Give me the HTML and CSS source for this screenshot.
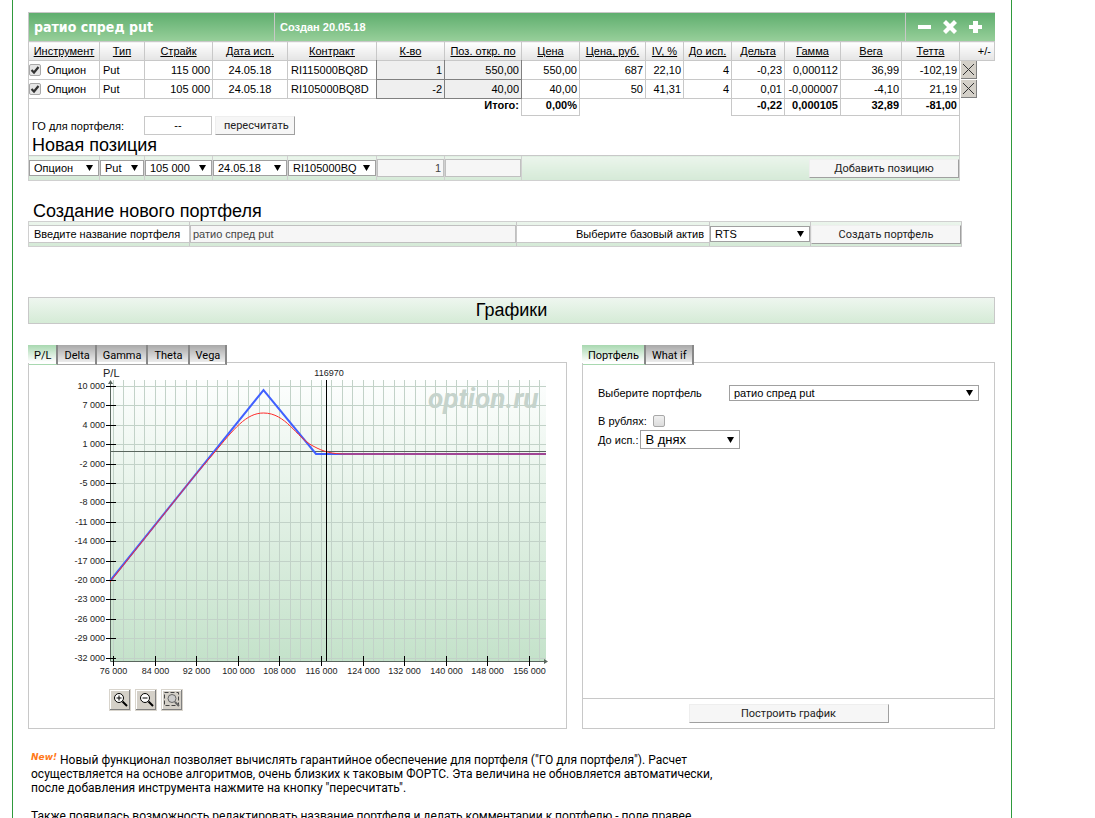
FILE: index.html
```html
<!DOCTYPE html>
<html lang="ru">
<head>
    <meta charset="UTF-8">
    <title>Портфель опционов</title>
    <link rel="stylesheet" href="styles.css">
</head>
<body>

<div class="page">
    <div class="title-bar">
        <h1>ратио спред put</h1>
        <div class="created">Создан 20.05.18</div>
        <div class="tools">
            <button type="button" aria-label="Свернуть"><svg width="13" height="14"><path d="M0 5h13v4H0z"/></svg></button>
            <button type="button" aria-label="Закрыть"><svg width="14" height="14"><path d="M3 0L7 4L11 0L14 3L10 7L14 11L11 14L7 10L3 14L0 11L4 7L0 3z"/></svg></button>
            <button type="button" aria-label="Добавить"><svg width="13" height="14"><path d="M4 1h5v4h4v4H9v4H4V9H0V5h4z"/></svg></button>
        </div>
    </div>

    <table class="positions">
        <colgroup>
            <col class="c-tool"><col class="c-type"><col class="c-strike"><col class="c-date"><col class="c-contract">
            <col class="c-qty"><col class="c-open"><col class="c-price"><col class="c-rub"><col class="c-iv"><col class="c-days">
            <col class="c-delta"><col class="c-gamma"><col class="c-vega"><col class="c-theta"><col class="c-del">
        </colgroup>
        <thead>
            <tr>
                <th><a href="#">Инструмент</a></th>
                <th><a href="#">Тип</a></th>
                <th><a href="#">Страйк</a></th>
                <th><a href="#">Дата исп.</a></th>
                <th><a href="#">Контракт</a></th>
                <th><a href="#">К-во</a></th>
                <th><a href="#">Поз. откр. по</a></th>
                <th><a href="#">Цена</a></th>
                <th><a href="#">Цена, руб.</a></th>
                <th><a href="#">IV, %</a></th>
                <th><a href="#">До исп.</a></th>
                <th><a href="#">Дельта</a></th>
                <th><a href="#">Гамма</a></th>
                <th><a href="#">Вега</a></th>
                <th><a href="#">Тетта</a></th>
                <th class="right">+/-</th>
            </tr>
        </thead>
        <tbody>
            <tr>
                <td class="tool"><label><input type="checkbox" checked>Опцион</label></td>
                <td class="left">Put</td>
                <td>115 000</td>
                <td class="mid">24.05.18</td>
                <td class="left">RI115000BQ8D</td>
                <td class="edit"><input type="text" value="1" aria-label="К-во"></td>
                <td class="edit"><input type="text" value="550,00" aria-label="Поз. откр. по"></td>
                <td>550,00</td>
                <td>687</td>
                <td>22,10</td>
                <td>4</td>
                <td>-0,23</td>
                <td>0,000112</td>
                <td>36,99</td>
                <td>-102,19</td>
                <td class="del"><button type="button" aria-label="Удалить"><svg width="11" height="11"><path d="M0 0L11 11M11 0L0 11"/></svg></button></td>
            </tr>
            <tr>
                <td class="tool"><label><input type="checkbox" checked>Опцион</label></td>
                <td class="left">Put</td>
                <td>105 000</td>
                <td class="mid">24.05.18</td>
                <td class="left">RI105000BQ8D</td>
                <td class="edit"><input type="text" value="-2" aria-label="К-во"></td>
                <td class="edit"><input type="text" value="40,00" aria-label="Поз. откр. по"></td>
                <td>40,00</td>
                <td>50</td>
                <td>41,31</td>
                <td>4</td>
                <td>0,01</td>
                <td>-0,000007</td>
                <td>-4,10</td>
                <td>21,19</td>
                <td class="del"><button type="button" aria-label="Удалить"><svg width="11" height="11"><path d="M0 0L11 11M11 0L0 11"/></svg></button></td>
            </tr>
            <tr class="total">
                <td colspan="7" class="total-name">Итого:</td>
                <td>0,00%</td>
                <td colspan="3" class="blank"></td>
                <td>-0,22</td>
                <td>0,000105</td>
                <td>32,89</td>
                <td>-81,00</td>
                <td class="blank"></td>
            </tr>
            <tr>
                <td colspan="15" class="margin">
                    <div class="margin-row">
                        <span class="margin-name">ГО для портфеля:</span>
                        <span class="margin-value">--</span>
                        <button type="button" class="btn recount">пересчитать</button>
                    </div>
                    <h2>Новая позиция</h2>
                </td>
                <td class="blank"></td>
            </tr>
            <tr class="new">
                <td><select aria-label="Инструмент"><option>Опцион</option></select></td>
                <td><select aria-label="Тип"><option>Put</option></select></td>
                <td><select aria-label="Страйк"><option>105 000</option></select></td>
                <td><select aria-label="Дата исп."><option>24.05.18</option></select></td>
                <td><select aria-label="Контракт"><option>RI105000BQ</option></select></td>
                <td><input type="text" class="field num" value="1" aria-label="К-во"></td>
                <td><input type="text" class="field num" value="" aria-label="Поз. откр. по"></td>
                <td colspan="8"><button type="button" class="btn wide">Добавить позицию</button></td>
                <td class="blank"></td>
            </tr>
        </tbody>
    </table>

    <h2 class="create-title">Создание нового портфеля</h2>
    <form class="create">
        <div><label class="caption" for="name">Введите название портфеля</label></div>
        <div><input type="text" class="field" id="name" value="ратио спред put"></div>
        <div><label class="caption end" for="asset">Выберите базовый актив</label></div>
        <div><select id="asset"><option>RTS</option></select></div>
        <div><button type="button" class="btn wide">Создать портфель</button></div>
    </form>

    <h2 class="charts-title">Графики</h2>

    <div class="charts">
        <section>
            <div class="tabs">
                <button type="button" class="tab active">P/L</button>
                <button type="button" class="tab">Delta</button>
                <button type="button" class="tab">Gamma</button>
                <button type="button" class="tab">Theta</button>
                <button type="button" class="tab">Vega</button>
            </div>
            <div class="panel">
                <svg class="chart" id="chart" width="530" height="320">
                    <defs>
                        <linearGradient id="bg" x1="0" y1="0" x2="0" y2="1">
                            <stop offset="0" stop-color="#fdfefe"/>
                            <stop offset="1" stop-color="#c4e2ca"/>
                        </linearGradient>
                    </defs>
                    <rect x="81" y="16" width="436" height="281" fill="url(#bg)"/>
                    <path id="grid" class="grid"/>
                    <text x="399" y="44" class="mark">option.ru</text>
                    <path class="axis" d="M81.500 18V297.500H518M82 87.500H517"/>
                    <path class="tip" d="M79 20L81.500 16L84 20zM515 295L519 297.500L515 300z"/>
                    <path class="blue" d="M81 217L234.500 26L287 90H517"/>
                    <path class="red" d="M81 218L163 115L185 89C205 65 217 49 234.500 49C257 49 267 73 284 82C295 88 303 90 317 90H517"/>
                    <path id="ticks" class="ticks"/>
                    <path class="ticks" d="M297.500 16V297"/>
                    <text x="74" y="13" class="name">P/L</text>
                    <text x="300" y="12" class="center">116970</text>
                </svg>
                <div class="zoom">
                    <button type="button" aria-label="Увеличить"><svg width="18" height="18"><circle cx="8" cy="7" r="4.500" fill="#fff"/><path d="M5.500 7H10.500M8 4.500V9.500"/><path class="grip" d="M11.500 10.500L16 15"/></svg></button>
                    <button type="button" aria-label="Уменьшить"><svg width="18" height="18"><circle cx="8" cy="7" r="4.500" fill="#fff"/><path d="M5.500 7H10.500"/><path class="grip" d="M11.500 10.500L16 15"/></svg></button>
                    <button type="button" aria-label="Выделить область"><svg width="18" height="18"><rect x="1.500" y="1.500" width="14" height="13" fill="none" stroke="#444" stroke-dasharray="4 2"/><circle cx="9" cy="7.500" r="4" fill="#ccc" class="lens"/><path class="grip grey" d="M12 11L16 15"/></svg></button>
                </div>
            </div>
        </section>

        <section>
            <div class="tabs">
                <button type="button" class="tab active">Портфель</button>
                <button type="button" class="tab">What if</button>
            </div>
            <div class="panel settings">
                <div class="options">
                    <div class="row first">
                        <label for="portfolio">Выберите портфель</label>
                        <select id="portfolio"><option>ратио спред put</option></select>
                    </div>
                    <div class="row">
                        <label for="rub">В рублях:</label>
                        <input type="checkbox" id="rub">
                    </div>
                    <div class="row">
                        <label for="days">До исп.:</label>
                        <select id="days" class="big"><option>В днях</option></select>
                    </div>
                </div>
                <div class="build"><button type="button" class="btn">Построить график</button></div>
            </div>
        </section>
    </div>

    <div class="news">
        <p><sup>New!</sup> Новый функционал позволяет вычислять гарантийное обеспечение для портфеля ("ГО для портфеля"). Расчет осуществляется на основе алгоритмов, очень близких к таковым ФОРТС. Эта величина не обновляется автоматически, после добавления инструмента нажмите на кнопку "пересчитать".</p>
        <p>Также появилась возможность редактировать название портфеля и делать комментарии к портфелю - поле правее</p>
    </div>
</div>

<script>
    var chart = document.getElementById('chart')
    var grid = ''
    var ticks = ''

    function label(x, y, value, cls) {
        var text = document.createElementNS('http://www.w3.org/2000/svg', 'text')
        text.setAttribute('x', x)
        text.setAttribute('y', y)
        text.setAttribute('class', cls)
        text.textContent = String(value).replace(/(\d{3})$/, ' $1')
        chart.appendChild(text)
    }

    // horizontal lines, every 3000
    for (var i = 0; i < 15; i++) {
        var y = Math.round(22 + i * 19.4) + 0.5
        grid += 'M82 ' + y + 'H517'
        ticks += 'M77 ' + y + 'H87'
        label(76, y + 2, 10000 - i * 3000, 'end')
    }

    // vertical lines, every 2000, each fourth one has a label
    for (var j = 0; j < 42; j++) {
        var x = Math.round(84 + j * 10.4) + 0.5
        grid += 'M' + x + ' 16V297'
        if (j % 4 == 0) {
            ticks += 'M' + x + ' 292V302'
            label(x, 310, 76000 + j * 2000, 'center')
        }
    }
    document.getElementById('grid').setAttribute('d', grid)
    document.getElementById('ticks').setAttribute('d', ticks)
</script>
</body>
</html>
```
FILE: styles.css
```css
*{
    box-sizing: border-box;
}
body{
    margin: 0;
    background: white;
    color: black;
    font-family: "Liberation Sans", Arial, sans-serif;
    font-size: 11px;
}
button, input, select{
    margin: 0;
    font: inherit;
    color: inherit;
}
h1, h2, p{
    margin: 0;
}
h2{
    font-size: 18px;
    line-height: 20px;
    font-weight: normal;
}
.page{
    min-height: 100vh;
    margin: 0 83px 0 12px;
    padding: 12px 16px 0 15px;
    border-left: 1px solid #2f9a3c;
    border-right: 1px solid #2f9a3c;
}

/* title */
.title-bar{
    display: flex;
    align-items: stretch;
    height: 29px;
    border: 1px solid #c8c8c8;
    border-width: 1px 0 0 1px;
    background: linear-gradient(#5fae6e, #97cf9a);
    color: white;
    font-weight: bold;
    line-height: 28px;
}
h1{
    width: 246px;
    padding-left: 5px;
    border-right: 1px solid #c8c8c8;
    font-family: "DejaVu Sans Condensed", Tahoma, sans-serif;
    font-size: 14px;
}
.created{
    flex: 1;
    padding-left: 5px;
}
.tools{
    display: flex;
    align-items: center;
    gap: 12px;
    width: 90px;
    padding-left: 12px;
    border-left: 1px solid #c8c8c8;
}
.tools button{
    padding: 0;
    border: 0;
    background: none;
}
.tools svg{
    display: block;
    fill: white;
}

/* positions */
.positions{
    width: 100%;
    table-layout: fixed;
    border-collapse: collapse;
}
.c-tool{ width: 71px; }
.c-type{ width: 45px; }
.c-strike{ width: 68px; }
.c-date{ width: 75px; }
.c-contract{ width: 89px; }
.c-qty{ width: 68px; }
.c-open{ width: 77px; }
.c-price{ width: 58px; }
.c-rub{ width: 66px; }
.c-iv{ width: 38px; }
.c-days{ width: 48px; }
.c-delta{ width: 53px; }
.c-gamma{ width: 56px; }
.c-vega{ width: 61px; }
.c-theta{ width: 58px; }
.c-del{ width: 35px; }
th, td{
    height: 19px;
    padding: 0 2px;
    border: 1px solid #c8c8c8;
    white-space: nowrap;
    line-height: 14px;
}
th{
    padding: 0;
    background: linear-gradient(white, #e4e4e4);
    font-weight: normal;
    text-align: center;
}
th.right{
    padding-right: 3px;
    text-align: right;
}
th a{
    color: black;
}
td{
    text-align: right;
}
td.left{
    padding-left: 3px;
    text-align: left;
}
td.mid{
    text-align: center;
}
td.tool{
    padding: 0;
    text-align: left;
}
.tool label{
    display: flex;
    align-items: center;
    gap: 6px;
}
input[type=checkbox]{
    appearance: none;
    width: 12px;
    height: 12px;
    border: 1px solid #a8a8a8;
    border-radius: 2px;
    background: linear-gradient(#f0f0f0, #dcdcdc);
}
input[type=checkbox]:checked{
    background: url("data:image/svg+xml,%3Csvg xmlns='http://www.w3.org/2000/svg' width='10' height='10'%3E%3Cpath d='M1.500 5L4 7.500L8.500 2' fill='none' stroke='%23333' stroke-width='2.200'/%3E%3C/svg%3E") center no-repeat, #e6e6e6;
}
/* double wins over the solid borders of the neighbour cells */
td.edit{
    padding: 0;
    border: 1px double #808080;
    border-top-style: solid;
    background: #efefef;
}
.edit input{
    display: block;
    width: 100%;
    height: 18px;
    padding: 0 2px;
    border: 0;
    background: none;
    text-align: right;
}
td.del{
    padding: 0 0 0 1px;
    border-width: 0;
}
.del button{
    display: block;
    width: 16px;
    height: 18px;
    padding: 2px;
    border: 1px solid #808080;
    border-width: 0 1px 1px 0;
    background: #d4d0c8;
}
.del svg{
    display: block;
    stroke: #333;
}
td.blank{
    border: 0;
}
.total td{
    height: 17px;
    padding-bottom: 3px;
    font-weight: bold;
    line-height: 13px;
}
td.total-name{
    border-width: 0 1px 0 1px;
}
td.margin{
    padding: 0 3px;
    border-top: 0;
    text-align: left;
}
.margin-row{
    display: flex;
    align-items: center;
    gap: 3px;
    height: 19px;
}
.margin-name{
    width: 109px;
}
.margin-value{
    width: 68px;
    height: 19px;
    border: 1px solid #c8c8c8;
    line-height: 17px;
    text-align: center;
}
.btn{
    height: 19px;
    padding: 0 8px;
    border: 1px solid #eee;
    border-right-color: #a0a0a0;
    border-bottom-color: #a0a0a0;
    background: #f6f6f6;
    color: #222;
    font-family: Roboto, Tahoma, sans-serif;
    line-height: 17px;
}
.btn.recount{
    width: 80px;
}
.btn.wide{
    width: 150px;
}
select{
    appearance: none;
    display: block;
    width: 100%;
    height: 16px;
    padding: 0 4px;
    border: 1px solid #a0a0a0;
    border-radius: 0;
    background: url("data:image/svg+xml,%3Csvg xmlns='http://www.w3.org/2000/svg' width='7' height='6'%3E%3Cpath d='M0 0H7L3.500 6z'/%3E%3C/svg%3E") right 5px center no-repeat white;
    line-height: 14px;
}
.new td{
    height: 25px;
    padding: 0;
    background: linear-gradient(#ebf5ec, #d5ead7);
    border-color: #d0d0d0;
}
.new td.blank{
    background: none;
}
.new .wide{
    display: block;
    margin-left: auto;
}
.field{
    display: block;
    width: 100%;
    height: 18px;
    padding: 0 2px;
    border: 1px solid #c0c0c0;
    background: #f6f6f6;
    color: #444;
}
.num{
    text-align: right;
}

/* new portfolio */
.create-title{
    margin: 20px 0 0 5px;
}
.create{
    display: grid;
    grid-template-columns: 161px 1fr 193px 101px 151px;
    margin-right: 33px;
    border: 1px solid #d0d0d0;
    border-right: 0;
    background: linear-gradient(#ebf5ec, #d5ead7);
}
.create div{
    display: flex;
    align-items: center;
    height: 24px;
    border-right: 1px solid #c8c8c8;
}
.caption{
    width: 100%;
    height: 18px;
    padding: 0 5px;
    border: 1px solid #c8c8c8;
    border-width: 1px 0;
    background: white;
    line-height: 16px;
    white-space: nowrap;
}
.end{
    text-align: right;
}
.charts-title{
    height: 27px;
    margin: 50px 0 21px;
    border: 1px solid #c8c8c8;
    background: linear-gradient(#eef6ef, #d5ebd6);
    line-height: 25px;
    text-align: center;
}

/* charts */
.charts{
    display: grid;
    grid-template-columns: 539fr 413fr;
    gap: 15px;
}
.charts section{
    display: flex;
    flex-direction: column;
}
.tabs{
    display: flex;
    height: 18px;
    border-bottom: 1px solid #c8c8c8;
}
.tab{
    height: 20px;
    padding: 2px 5px 0 6px;
    border: 1px solid #a8a8a8;
    border-width: 0 2px 1px 0;
    border-right-color: #888;
    background: linear-gradient(#a8a8a8, #ececec 17px, white 17px);
    font-family: Roboto, Tahoma, sans-serif;
    line-height: 18px;
}
.tab.active{
    border-bottom-color: #a8d8b0;
    background: linear-gradient(#a8d8b0, white 17px);
}
.panel{
    height: 366px;
    border: 1px solid #c8c8c8;
    border-top: 0;
}
.chart{
    display: block;
    margin-top: 1px;
}
.chart text{
    font-size: 9px;
    fill: #222;
}
.chart .name{
    font-size: 11px;
}
.chart .end{
    text-anchor: end;
}
.chart .center{
    text-anchor: middle;
}
.chart .mark{
    font-family: Roboto, sans-serif;
    font-size: 28px;
    font-weight: bold;
    font-style: italic;
    fill: #c5d3cc;
}
.chart path{
    fill: none;
}
.grid{
    stroke: #c2d2c8;
}
.axis{
    stroke: #5a665e;
}
.chart .tip{
    fill: #5a665e;
}
.ticks{
    stroke: black;
}
.blue{
    stroke: #4060ff;
    stroke-width: 2;
}
.red{
    stroke: #ff2a2a;
}
.zoom{
    display: flex;
    gap: 4px;
    margin: 5px 0 0 80px;
}
.zoom button{
    width: 22px;
    height: 22px;
    padding: 1px;
    border: 1px solid #d8d4cc;
    background: #d4d0c8;
    box-shadow: inset -1px -1px #808080, inset 1px 1px white;
}
.zoom svg{
    display: block;
    stroke: black;
}
.zoom .grip{
    stroke-width: 2;
}
.zoom .lens, .zoom .grey{
    stroke: #666;
}
.settings{
    display: flex;
    flex-direction: column;
}
.options{
    flex: 1;
    padding: 22px 15px 0;
}
.row{
    display: flex;
    align-items: center;
    gap: 2px;
    height: 19px;
}
.row.first{
    height: 16px;
    margin-bottom: 10px;
}
.first label{
    width: 129px;
}
.first select{
    flex: 1;
}
.row input{
    margin-left: 4px;
}
.row .big{
    width: 100px;
    height: 19px;
    font-size: 13px;
}
.build{
    display: flex;
    justify-content: center;
    height: 30px;
    padding-top: 5px;
    border-top: 1px solid #c8c8c8;
}
.build .btn{
    width: 200px;
}
.news{
    max-width: 690px;
    margin-top: 24px;
    padding-left: 3px;
    font-family: Roboto, Tahoma, sans-serif;
    font-size: 12px;
    line-height: 14px;
}
.news p{
    margin-bottom: 14px;
}
.news sup{
    color: #ff7a1a;
    font-family: "DejaVu Sans", Verdana, sans-serif;
    font-size: 9px;
    font-weight: bold;
    font-style: italic;
    line-height: 9px;
    vertical-align: 4px;
}
```
